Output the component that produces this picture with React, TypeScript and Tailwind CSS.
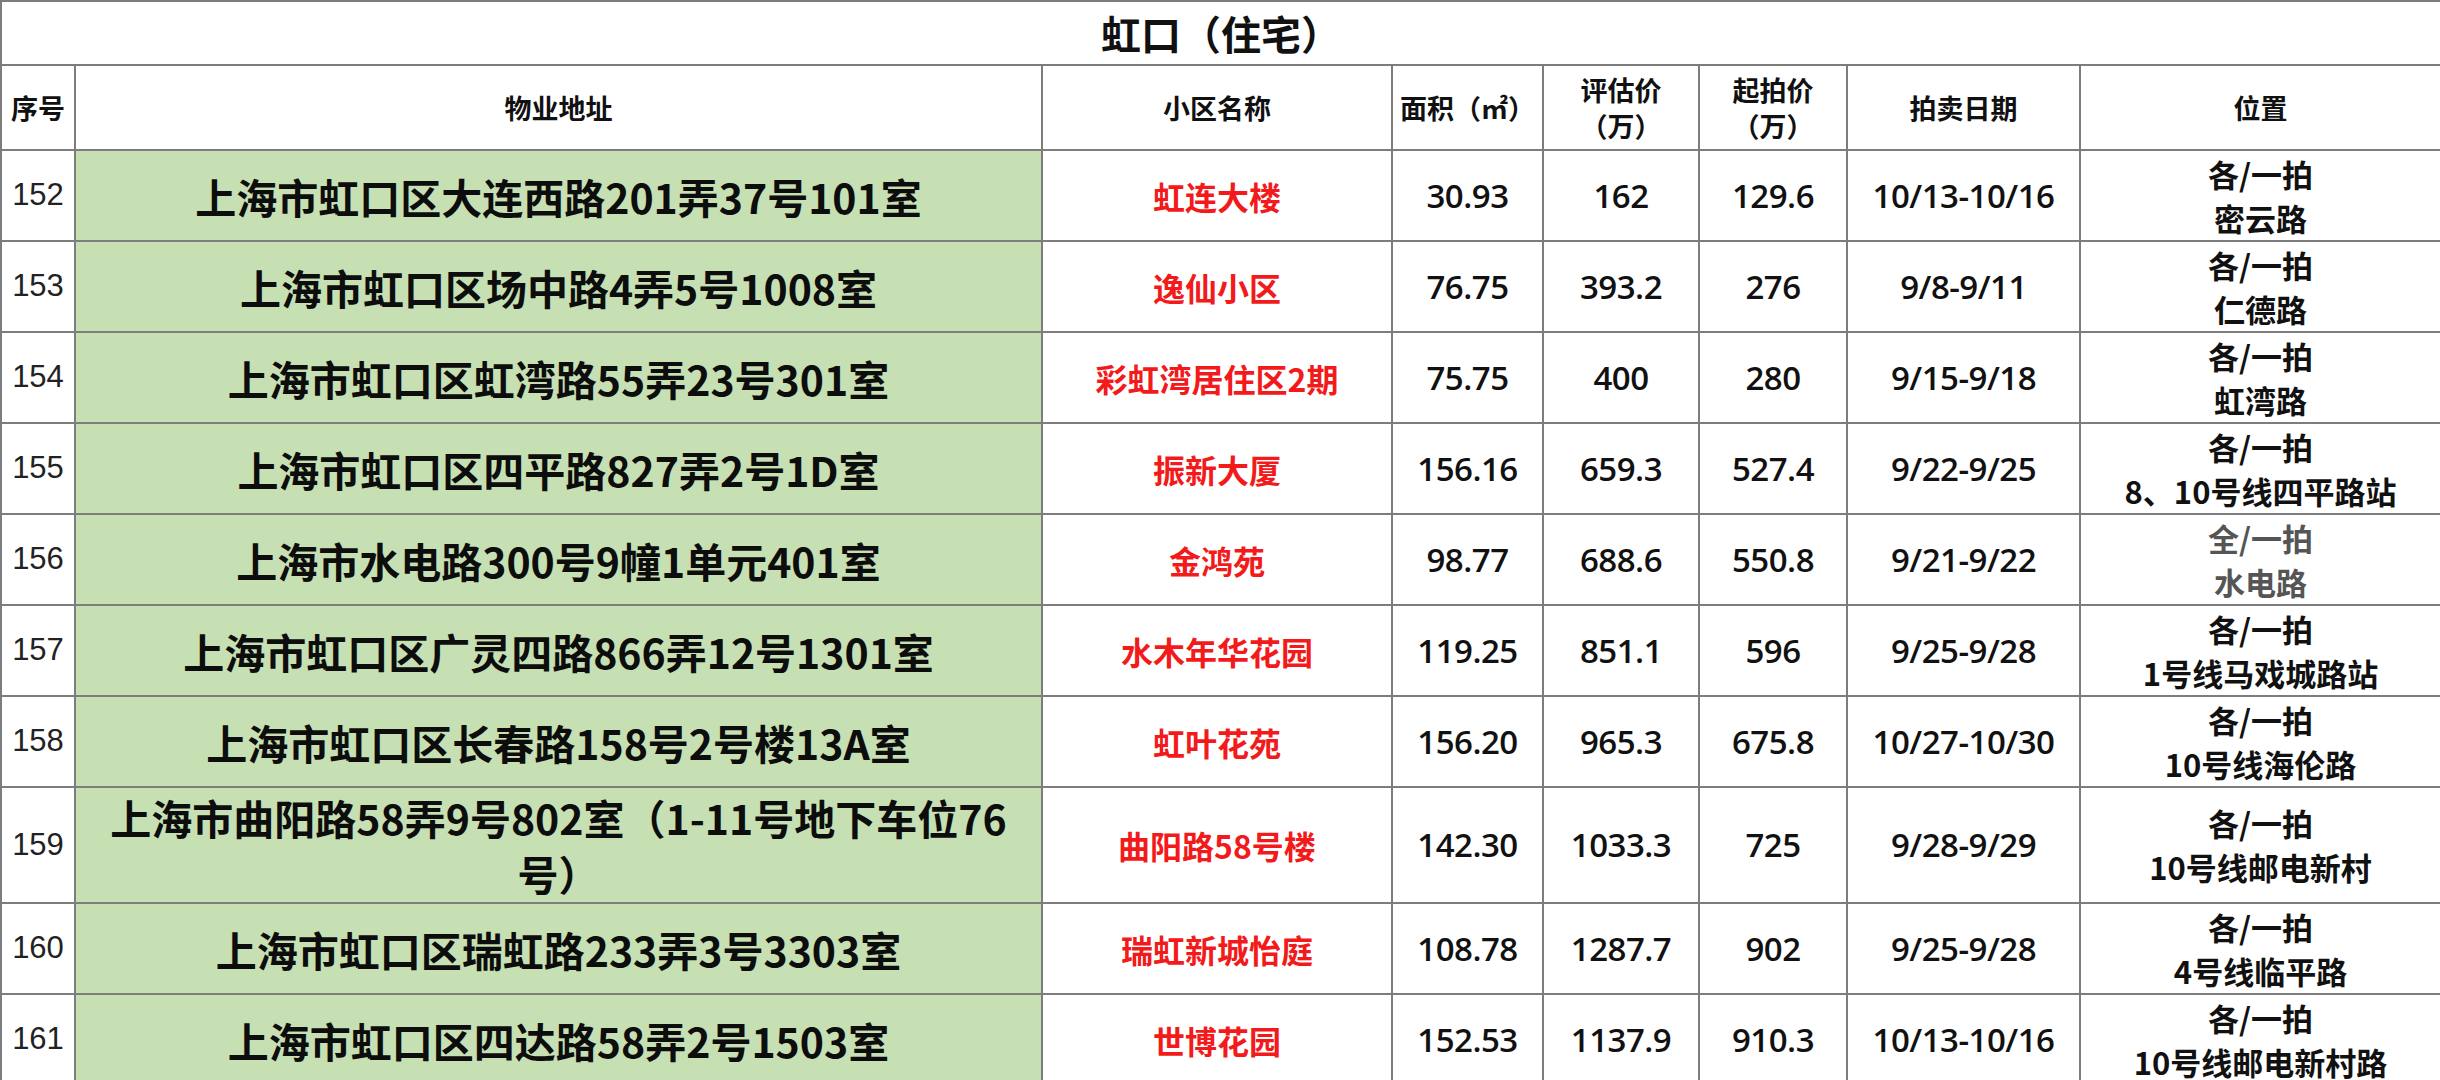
const rows = [
  { n: 152, addr: "上海市虹口区大连西路201弄37号101室", name: "虹连大楼", area: "30.93", evalP: "162", start: "129.6", date: "10/13-10/16", loc1: "各/一拍", loc2: "密云路" },
  { n: 153, addr: "上海市虹口区场中路4弄5号1008室", name: "逸仙小区", area: "76.75", evalP: "393.2", start: "276", date: "9/8-9/11", loc1: "各/一拍", loc2: "仁德路" },
  { n: 154, addr: "上海市虹口区虹湾路55弄23号301室", name: "彩虹湾居住区2期", area: "75.75", evalP: "400", start: "280", date: "9/15-9/18", loc1: "各/一拍", loc2: "虹湾路" },
  { n: 155, addr: "上海市虹口区四平路827弄2号1D室", name: "振新大厦", area: "156.16", evalP: "659.3", start: "527.4", date: "9/22-9/25", loc1: "各/一拍", loc2: "8、10号线四平路站" },
  { n: 156, addr: "上海市水电路300号9幢1单元401室", name: "金鸿苑", area: "98.77", evalP: "688.6", start: "550.8", date: "9/21-9/22", loc1: "全/一拍", loc2: "水电路", gray: true },
  { n: 157, addr: "上海市虹口区广灵四路866弄12号1301室", name: "水木年华花园", area: "119.25", evalP: "851.1", start: "596", date: "9/25-9/28", loc1: "各/一拍", loc2: "1号线马戏城路站" },
  { n: 158, addr: "上海市虹口区长春路158号2号楼13A室", name: "虹叶花苑", area: "156.20", evalP: "965.3", start: "675.8", date: "10/27-10/30", loc1: "各/一拍", loc2: "10号线海伦路" },
  { n: 159, addr: "上海市曲阳路58弄9号802室（1-11号地下车位76号）", name: "曲阳路58号楼", area: "142.30", evalP: "1033.3", start: "725", date: "9/28-9/29", loc1: "各/一拍", loc2: "10号线邮电新村", tall: true },
  { n: 160, addr: "上海市虹口区瑞虹路233弄3号3303室", name: "瑞虹新城怡庭", area: "108.78", evalP: "1287.7", start: "902", date: "9/25-9/28", loc1: "各/一拍", loc2: "4号线临平路" },
  { n: 161, addr: "上海市虹口区四达路58弄2号1503室", name: "世博花园", area: "152.53", evalP: "1137.9", start: "910.3", date: "10/13-10/16", loc1: "各/一拍", loc2: "10号线邮电新村路" },
];

const cell = "border-2 border-[#7d7d7d] text-center align-middle";
const num = "font-['Open_Sans','Liberation_Sans',sans-serif] text-[33px] font-semibold text-[#111] tracking-[-0.5px]";
const head = "font-['Noto_Sans_CJK_SC',sans-serif] text-[27px] font-bold text-[#111] leading-[36px]";

export default function App() {
  return (
    <div className="h-[1080px] w-[2440px] overflow-hidden bg-white">
      <table className="w-[2440px] table-fixed border-collapse">
        <colgroup>
          <col className="w-[74px]" />
          <col className="w-[967px]" />
          <col className="w-[350px]" />
          <col className="w-[151px]" />
          <col className="w-[156px]" />
          <col className="w-[148px]" />
          <col className="w-[233px]" />
          <col className="w-[361px]" />
        </colgroup>
        <tbody>
          <tr className="h-[64px]">
            <td
              colSpan={8}
              className={`${cell} font-['Noto_Sans_CJK_SC',sans-serif] text-[40px] font-bold text-[#111]`}
            >
              虹口（住宅）
            </td>
          </tr>
          <tr className="h-[85px]">
            <td className={`${cell} ${head}`}>序号</td>
            <td className={`${cell} ${head}`}>物业地址</td>
            <td className={`${cell} ${head}`}>小区名称</td>
            <td className={`${cell} ${head}`}>面积（㎡）</td>
            <td className={`${cell} ${head}`}>
              评估价
              <br />
              （万）
            </td>
            <td className={`${cell} ${head}`}>
              起拍价
              <br />
              （万）
            </td>
            <td className={`${cell} ${head}`}>拍卖日期</td>
            <td className={`${cell} ${head}`}>位置</td>
          </tr>
          {rows.map((r) => (
            <tr key={r.n} className={r.tall ? "h-[116px]" : "h-[91px]"}>
              <td className={`${cell} font-['Liberation_Sans',sans-serif] text-[31px] text-[#222]`}>
                {r.n}
              </td>
              <td
                className={`${cell} bg-[#c6e0b4] px-1 font-['Noto_Sans_CJK_SC',sans-serif] text-[41px] font-bold leading-[56px] text-[#0d0d0d]`}
              >
                {r.addr}
              </td>
              <td className={`${cell} font-['Noto_Sans_CJK_SC',sans-serif] text-[32px] font-bold text-[#f21a1a]`}>
                {r.name}
              </td>
              <td className={`${cell} ${num}`}>{r.area}</td>
              <td className={`${cell} ${num}`}>{r.evalP}</td>
              <td className={`${cell} ${num}`}>{r.start}</td>
              <td className={`${cell} ${num}`}>{r.date}</td>
              <td
                className={`${cell} font-['Noto_Sans_CJK_SC',sans-serif] text-[31px] font-bold leading-[44px] ${
                  r.gray ? "text-[#555]" : "text-[#111]"
                }`}
              >
                {r.loc1}
                <br />
                {r.loc2}
              </td>
            </tr>
          ))}
        </tbody>
      </table>
    </div>
  );
}
